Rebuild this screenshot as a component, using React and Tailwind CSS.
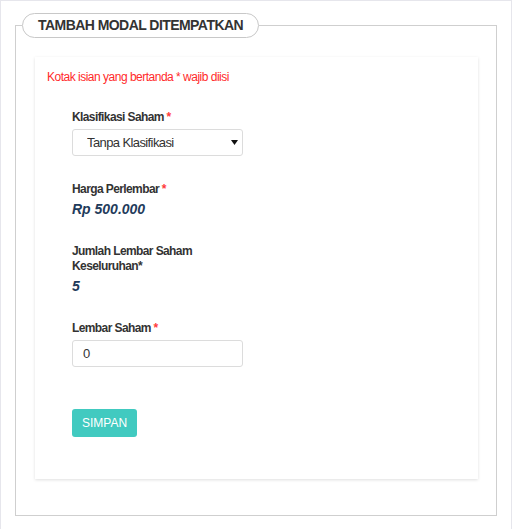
import React, { useState } from 'react';

const Label = ({ children, required }) => (
    <label className="block text-[12px] leading-[15px] font-bold tracking-[-0.6px] text-[#333]">
        {children}
        {required && <span className="text-[#ff3b3b]"> *</span>}
    </label>
);

const App = () => {
    const [klasifikasi, setKlasifikasi] = useState('tanpa');
    const [lembar, setLembar] = useState('0');

    return (
        <div className="w-[512px] h-[529px] bg-white border-t border-x border-[#e6e6ec] pt-[12px] px-[14px] font-['Liberation_Sans',Arial,sans-serif]">
            <fieldset className="border border-[#cfcfcf] pl-[19px] pr-[18px] pt-[19px] pb-[36px]">
                <legend className="ml-[-13px] h-[25px] px-[15px] rounded-full border border-[#c8c8c8] bg-white text-[14px] leading-[23px] font-bold tracking-[-0.55px] text-[#333]">
                    TAMBAH MODAL DITEMPATKAN
                </legend>
                <div className="bg-white shadow-[0_1px_3px_rgba(0,0,0,0.13)] pt-[12px] pb-[42px] pl-[12px]">
                    <p className="text-[12px] leading-[17px] tracking-[-0.5px] text-[#ff2a2a]">Kotak isian yang bertanda * wajib diisi</p>
                    <form className="pl-[25px] w-[196px]" onSubmit={(e) => e.preventDefault()}>
                        <div className="mt-[24px]">
                            <Label required>Klasifikasi Saham</Label>
                            <div className="relative mt-[4px]">
                                <select
                                    value={klasifikasi}
                                    onChange={(e) => setKlasifikasi(e.target.value)}
                                    className="appearance-none w-full h-[27px] pl-[14px] pr-6 rounded-[3px] border border-[#dcdcdc] bg-white text-[13px] tracking-[-0.6px] text-[#333] outline-none"
                                >
                                    <option value="tanpa">Tanpa Klasifikasi</option>
                                </select>
                                <svg className="pointer-events-none absolute right-[5px] top-[11px]" width="7" height="5" viewBox="0 0 7 5">
                                    <path d="M0 0h7L3.5 5z" fill="#111" />
                                </svg>
                            </div>
                        </div>

                        <div className="mt-[26px]">
                            <Label required>Harga Perlembar</Label>
                            <p className="mt-[3px] text-[14px] leading-[18px] font-bold italic text-[#1f3b5b]">Rp 500.000</p>
                        </div>

                        <div className="mt-[26px]">
                            <Label>Jumlah Lembar Saham Keseluruhan*</Label>
                            <p className="mt-[3px] text-[14px] leading-[18px] font-bold italic text-[#1f3b5b]">5</p>
                        </div>

                        <div className="mt-[26px]">
                            <Label required>Lembar Saham</Label>
                            <input
                                type="text"
                                value={lembar}
                                onChange={(e) => setLembar(e.target.value)}
                                className="mt-[4px] block w-full h-[27px] px-[10px] rounded-[3px] border border-[#dcdcdc] text-[13px] text-[#333] outline-none"
                            />
                        </div>

                        <button type="submit" className="mt-[42px] h-[28px] w-[65px] rounded-[3px] bg-[#41cac0] text-white text-[12px]">
                            SIMPAN
                        </button>
                    </form>
                </div>
            </fieldset>
        </div>
    );
};

export default App;
